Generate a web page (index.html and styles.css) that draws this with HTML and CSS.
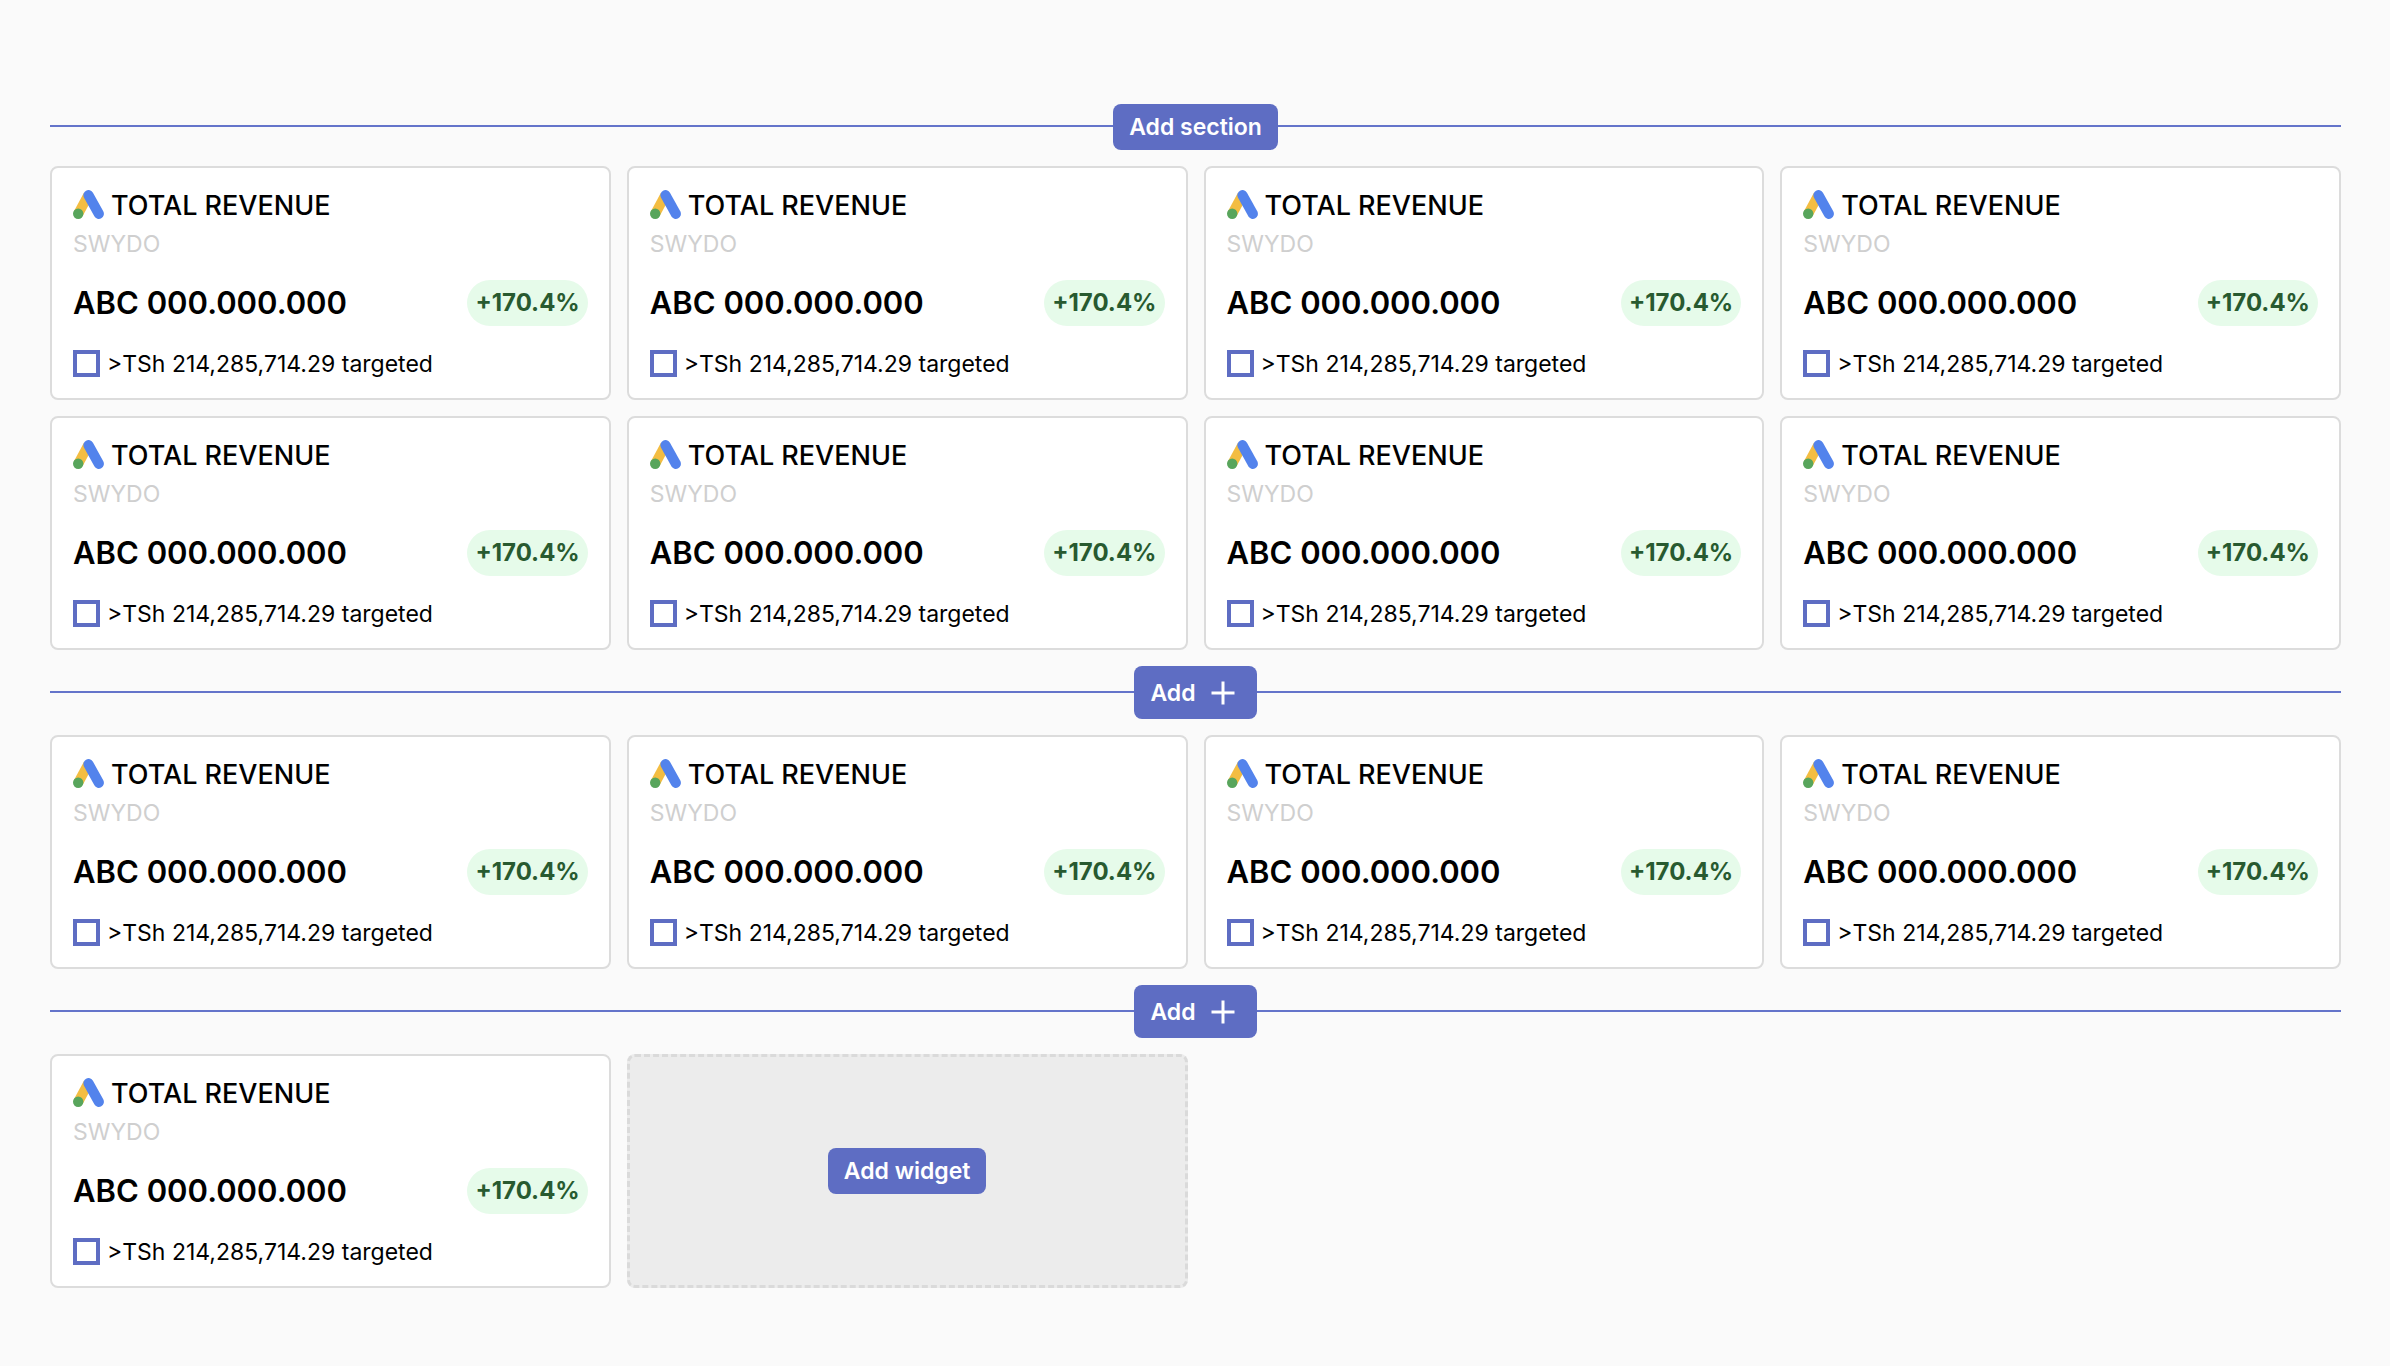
FILE: index.html
```
<!DOCTYPE html>
<html lang="en">
<head>
<meta charset="utf-8">
<meta name="viewport" content="width=device-width, initial-scale=1">
<title>Report widgets</title>
<link rel="stylesheet" href="styles.css">
</head>
<body>
<svg class="sprite" aria-hidden="true">
  <symbol id="ads" viewBox="0 0 31 29">
    <path d="M15.3 5.2 5.2 23.8" stroke="#f3bd42" stroke-width="10" fill="none"/>
    <path d="M15.5 5.2 25.8 23.8" stroke="#5383ec" stroke-width="10.2" stroke-linecap="round" fill="none"/>
    <circle cx="5.2" cy="23.7" r="5.2" fill="#58a55c"/>
  </symbol>
</svg>
<main class="board" id="board">
  <div class="divider"><button class="btn" type="button">Add section</button></div>
  <div class="grid" data-count="8"></div>
  <div class="divider"><button class="btn btn-add" type="button">Add <svg class="plus" viewBox="0 0 24 24" aria-hidden="true"><path d="M12 .5v23M.5 12h23"/></svg></button></div>
  <div class="grid" data-count="4"></div>
  <div class="divider"><button class="btn btn-add" type="button">Add <svg class="plus" viewBox="0 0 24 24" aria-hidden="true"><path d="M12 .5v23M.5 12h23"/></svg></button></div>
  <div class="grid" data-count="1">
    <div class="slot"><button class="btn" type="button">Add widget</button></div>
  </div>
</main>
<template id="widget">
  <article class="card">
    <h2 class="title"><svg class="logo" aria-hidden="true"><use href="#ads"/></svg>TOTAL REVENUE</h2>
    <p class="source">SWYDO</p>
    <div class="figures"><span class="value">ABC 000.000.000</span><span class="change">+170.4%</span></div>
    <label class="target"><input class="check" type="checkbox">&gt;TSh 214,285,714.29 targeted</label>
  </article>
</template>
<script src="widgets.js"></script>
</body>
</html>
```
FILE: styles.css
```
* { box-sizing: border-box; }

body {
  margin: 0;
  background: #fafafa;
  color: #000;
  font-family: Inter, "Liberation Sans", sans-serif;
}

.sprite { display: none; }

.board {
  display: flex;
  flex-direction: column;
  gap: 16px;
  padding: 104px 49px 78px 50px;
}

.divider {
  display: flex;
  align-items: center;
}

.divider::before,
.divider::after {
  content: "";
  flex: 1;
  height: 2px;
  margin-bottom: 2px;
  background: #6474ca;
}

.btn {
  display: flex;
  align-items: center;
  height: 46px;
  padding: 0 16px;
  border: 0;
  border-radius: 8px;
  background: #5e6dc3;
  color: #fff;
  font: 600 23px/28px Inter, "Liberation Sans", sans-serif;
  cursor: pointer;
}

.btn-add {
  gap: 15px;
  height: 53px;
  padding-right: 22px;
}

.plus {
  width: 24px;
  height: 24px;
  fill: none;
  stroke: #fff;
  stroke-width: 3;
}

.grid {
  display: grid;
  grid-template-columns: repeat(4, minmax(0, 1fr));
  gap: 16px;
}

.card {
  padding: 22px 21px 20px;
  border: 2px solid #dcdcdc;
  border-radius: 8px;
  background: #fff;
}

.title {
  display: flex;
  align-items: flex-start;
  gap: 7px;
  margin: 0 0 8px;
  font-size: 27px;
  font-weight: 500;
  line-height: 32px;
}

.logo {
  width: 31px;
  height: 29px;
}

.source {
  margin: 0 0 22px;
  color: #cfcfcf;
  font-size: 23px;
  line-height: 28px;
}

.figures {
  display: flex;
  align-items: center;
  justify-content: space-between;
  margin-bottom: 24px;
}

.value {
  font-size: 31px;
  font-weight: 600;
  line-height: 46px;
}

.change {
  padding: 0 8px;
  border-radius: 23px;
  background: #e6fbea;
  color: #285a30;
  font-size: 24px;
  font-weight: 700;
  line-height: 46px;
}

.target {
  display: flex;
  align-items: flex-start;
  gap: 7px;
  font-size: 23px;
  line-height: 28px;
}

.check {
  appearance: none;
  width: 27px;
  height: 27px;
  margin: 0;
  border: 4px solid #5e6dc3;
  background: #fff;
}

.check:checked { background: #5e6dc3; }

.slot {
  display: flex;
  align-items: center;
  justify-content: center;
  border: 3px dashed #dadada;
  border-radius: 8px;
  background: #ececec;
}
```
FILE: widgets.js
```
const template = document.getElementById("widget");

document.querySelectorAll(".grid").forEach((grid) => {
  for (let i = 0; i < Number(grid.dataset.count); i += 1) {
    grid.prepend(template.content.cloneNode(true));
  }
});
```
